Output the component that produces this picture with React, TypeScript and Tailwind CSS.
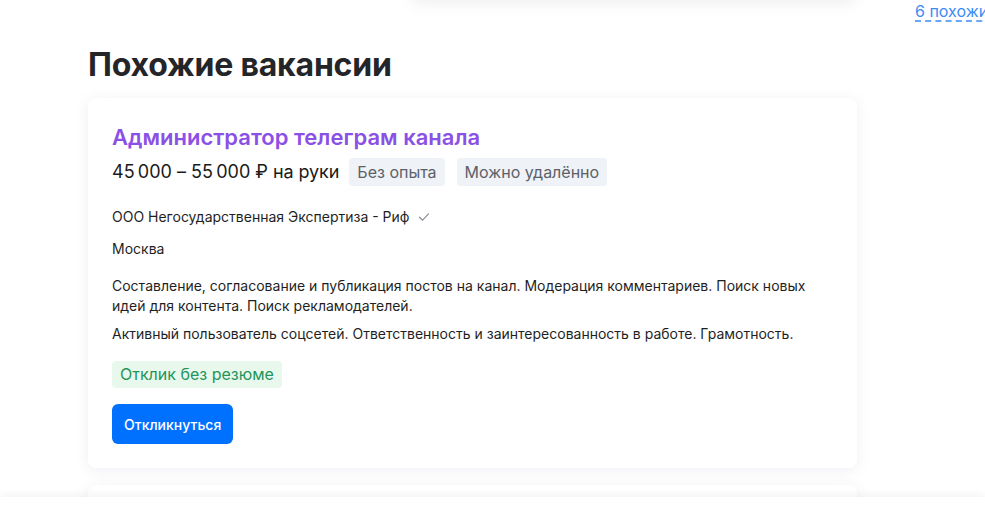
import React from 'react';

const CheckIcon = () => (
  <svg width="12" height="12" viewBox="0 0 12 12" fill="none" className="ml-[9px]">
    <path d="M1.5 6.2L4.6 9.2L10.5 2.8" stroke="#8a8f98" strokeWidth="1.2" strokeLinecap="round" strokeLinejoin="round" />
  </svg>
);

export default function App() {
  return (
    <div className="relative h-[505px] w-[985px] overflow-hidden bg-white font-['Inter',sans-serif] text-[#1f1f1f]">
      {/* previous block peeking in from above */}
      <div className="absolute left-[412px] top-[-40px] h-[40px] w-[443px] rounded-md bg-white shadow-[0_4px_14px_rgba(120,130,120,0.12)]" />
      <a className="absolute left-[915px] top-0 whitespace-nowrap text-[16px] leading-[22px] text-[#3b8bf5] underline decoration-dashed underline-offset-[4px]">
        6 похожих вакансий
      </a>

      <div className="pl-[88px] pt-[45px]">
        <h2 className="text-[32px] font-bold leading-[40px] tracking-[-0.2px] text-[#232529]">Похожие вакансии</h2>

        <div className="mt-[13px] w-[769px] rounded-lg bg-white px-[24px] pb-[24px] pt-[25px] shadow-[0_2px_14px_rgba(90,100,150,0.10)]">
          <div className="text-[22px] font-semibold leading-[28px] text-[#8b50e6]">Администратор телеграм канала</div>

          <div className="mt-[7px] flex items-center">
            <span className="text-[18px] leading-[28px] tracking-[-0.1px] text-[#1a1a1a]">45&#8239;000 – 55&#8239;000 ₽ на руки</span>
            <span className="ml-[10px] rounded-[4px] bg-[#eff2f6] px-[8px] text-[16px] leading-[28px] text-[#5b6169]">Без опыта</span>
            <span className="ml-[12px] rounded-[4px] bg-[#eff2f6] px-[8px] text-[16px] leading-[28px] text-[#5b6169]">Можно удалённо</span>
          </div>

          <div className="mt-[21px] flex items-center text-[14px] leading-[20px]">
            <span>ООО Негосударственная Экспертиза - Риф</span>
            <CheckIcon />
          </div>

          <div className="mt-[12px] text-[14px] leading-[20px]">Москва</div>

          <p className="mt-[17px] w-[700px] text-[14px] leading-[20px]">
            Составление, согласование и публикация постов на канал. Модерация комментариев. Поиск новых идей для контента. Поиск рекламодателей.
          </p>
          <p className="mt-[8px] text-[14px] leading-[20px]">
            Активный пользователь соцсетей. Ответственность и заинтересованность в работе. Грамотность.
          </p>

          <div className="mt-[17px] inline-block rounded-[4px] bg-[#e9f8ed] px-[8px] text-[16px] leading-[27px] text-[#23955a]">
            Отклик без резюме
          </div>

          <div className="mt-[16px]">
            <button className="h-[40px] rounded-md bg-[#0070ff] px-[12px] text-[14px] font-medium text-white">Откликнуться</button>
          </div>
        </div>

        <div className="mt-[17px] h-[60px] w-[769px] rounded-lg bg-white shadow-[0_2px_14px_rgba(90,100,150,0.10)]" />
      </div>

      {/* sticky bottom bar */}
      <div className="absolute bottom-0 left-0 h-[8px] w-full bg-white shadow-[0_-2px_8px_rgba(0,0,0,0.06)]" />
    </div>
  );
}
